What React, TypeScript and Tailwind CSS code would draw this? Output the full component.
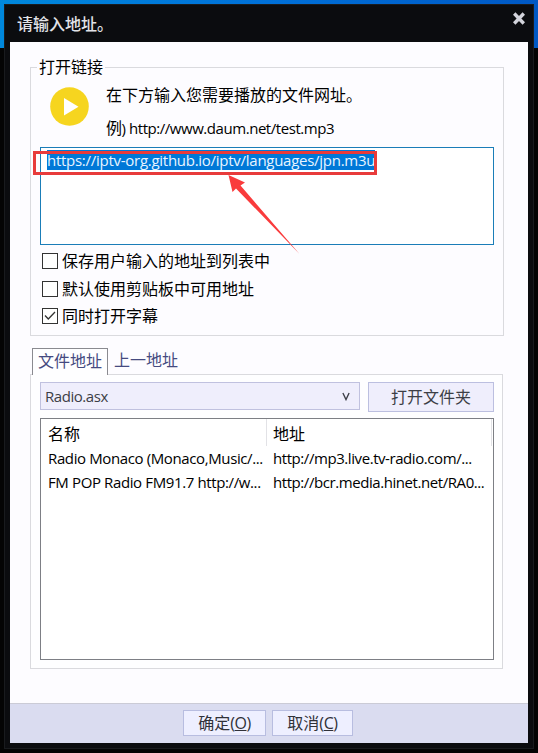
import React from 'react';

function Check({ label, checked = false }: { label: string; checked?: boolean }) {
  return (
    <label className="flex h-[28px] items-center">
      <span className="flex size-[16px] items-center justify-center border border-[#333] bg-white">
        {checked && (
          <svg width="12" height="10" viewBox="0 0 12 10" fill="none" stroke="#333" strokeWidth="1.3">
            <path d="M1 4.500 4.300 8 11 1" />
          </svg>
        )}
      </span>
      <span className="ml-[4px] leading-[20px]">{label}</span>
    </label>
  );
}

const rows = [
  { name: 'Radio Monaco (Monaco,Music/...', url: 'http://mp3.live.tv-radio.com/...' },
  { name: 'FM POP Radio FM91.7 http://w...', url: 'http://bcr.media.hinet.net/RA0...' },
];

export default function App() {
  return (
    <div className="h-[753px] w-[538px] overflow-hidden whitespace-nowrap bg-[#040404] bg-[linear-gradient(90deg,#0088dc,#0070d8_50%,#0058c4)] bg-[length:100%_48px] bg-no-repeat px-[4px] pt-[4px] font-['Open_Sans','Noto_Sans_CJK_SC',sans-serif] text-[16px] text-black">
      <div className="flex h-[745px] flex-col border border-[#191b1e] bg-[#0b0c0f] px-[5px]">
        <header className="flex h-[37px] shrink-0 items-start justify-between">
          <h1 className="ml-[7px] mt-[8px] text-[16px] font-medium leading-[22px] text-[#e2e3e8]">请输入地址。</h1>
          <button className="mr-[3px] mt-[7px]" aria-label="关闭">
            <svg width="12" height="13" viewBox="0 0 12 13" stroke="#d3d4dc" strokeWidth="3.4">
              <path d="M1.200 1.500 10.800 11.500M10.800 1.500 1.200 11.500" />
            </svg>
          </button>
        </header>

        <main className="h-[661px] w-[518px] shrink-0 bg-[#fdfcff] px-[20px] pt-[17px]">
          <fieldset className="h-[277px] w-[474px] border border-[#dadade] px-[9px]">
            <legend className="-ml-[3px] px-[2px] leading-[16px]">打开链接</legend>
            <div className="flex h-[72px]">
              <svg className="ml-[10px] mt-[12px]" width="39" height="39" viewBox="0 0 39 39">
                <circle cx="19.5" cy="19.5" r="19.3" fill="#f6d51f" />
                <path d="M14 11v17.500l14.500-8.800z" fill="#fff" />
              </svg>
              <div className="ml-[17px] mt-[9px]">
                <p className="leading-[22px]">在下方输入您需要播放的文件网址。</p>
                <p className="mt-[11px] text-[15px] leading-[22px] tracking-[-0.45px]">
                  <span className="text-[16px]">例</span>) http://www.daum.net/test.mp3
                </p>
              </div>
            </div>
            <div className="relative h-[98px] w-[454px] border border-[#1a7db8] bg-white pl-[6px] pt-[2px]">
              <div className="h-[20px] w-[328px] bg-[#0078d7] text-[15px] leading-[20px] tracking-[-0.27px] text-[#e8f4ff]">
                https://iptv-org.github.io/iptv/languages/jpn.m3u
              </div>
              <div className="absolute -left-[8px] top-[3px] h-[24px] w-[344px] border-[3px] border-[#e83b3b]" />
              <svg className="absolute left-[186px] top-[26px]" width="75" height="82" viewBox="0 0 75 82">
                <path d="M1.500 1 18 8.500 13.500 11.500 72.500 80 9 14.500 5.500 18z" fill="#f93b3c" />
              </svg>
            </div>
            <div className="ml-[2px] mt-[2px]">
              <Check label="保存用户输入的地址到列表中" />
              <Check label="默认使用剪贴板中可用地址" />
              <div className="-mt-px">
                <Check label="同时打开字幕" checked />
              </div>
            </div>
          </fieldset>

          <section className="mt-[12px]">
            <nav className="flex h-[26px] pl-[2px] text-[#454a80]">
              <button className="z-10 flex h-[27px] w-[76px] shrink-0 justify-center border border-b-0 border-[#8a8a90] bg-[#fefeff] leading-[24px]">文件地址</button>
              <button className="ml-[6px] flex h-[26px] leading-[25px]">上一地址</button>
            </nav>
            <div className="h-[295px] w-[473px] border border-[#dadade] bg-[#fefeff] px-[9px] pt-[7px]">
              <div className="flex items-start justify-between">
                <div className="flex h-[28px] w-[320px] items-center justify-between border border-[#c0c1df] bg-[#efeefc] pl-[4px] pr-[9px] text-[15px] tracking-[-0.45px] text-[#3c3e46]">
                  <span>Radio.asx</span>
                  <svg className="mt-px" width="8" height="9" viewBox="0 0 9 9" fill="none" stroke="#3c3e46" strokeWidth="1.5">
                    <path d="M1 .5 4.500 8 8 .5" />
                  </svg>
                </div>
                <button className="mr-[-1px] h-[30px] w-[126px] border border-[#bcbfe0] bg-[#efeefc] text-[#3c3e46]">打开文件夹</button>
              </div>
              <div className="mt-[6px] h-[242px] w-[454px] border border-[#7d7f85] bg-white">
                <div className="flex h-[27px] pl-[7px] leading-[30px]">
                  <span className="w-[219px] border-r border-[#e2e2e6]">名称</span>
                  <span className="w-[225px] border-r border-[#e2e2e6] pl-[6px]">地址</span>
                </div>
                {rows.map((r) => (
                  <div key={r.url} className="flex h-[24px] pl-[7px] text-[15px] leading-[24px]">
                    <span className="w-[225px] tracking-[-0.38px]">{r.name}</span>
                    <span className="tracking-[-0.43px]">{r.url}</span>
                  </div>
                ))}
              </div>
            </div>
          </section>
        </main>

        <footer className="flex h-[40px] w-[518px] shrink-0 border-t border-[#cbcbd6] bg-[#dadcf0] pl-[173px] pt-[6px] text-[#303138]">
          <button className="h-[26px] w-[83px] border border-[#b8bde0] bg-[#eeefff] leading-[24px]">
            确定<span className="tracking-[-0.5px]">(<u>O</u>)</span>
          </button>
          <button className="ml-[6px] h-[26px] w-[81px] border border-[#b8bde0] bg-[#eeefff] leading-[24px]">
            取消<span className="tracking-[-0.4px]">(<u>C</u>)</span>
          </button>
        </footer>
      </div>
    </div>
  );
}
